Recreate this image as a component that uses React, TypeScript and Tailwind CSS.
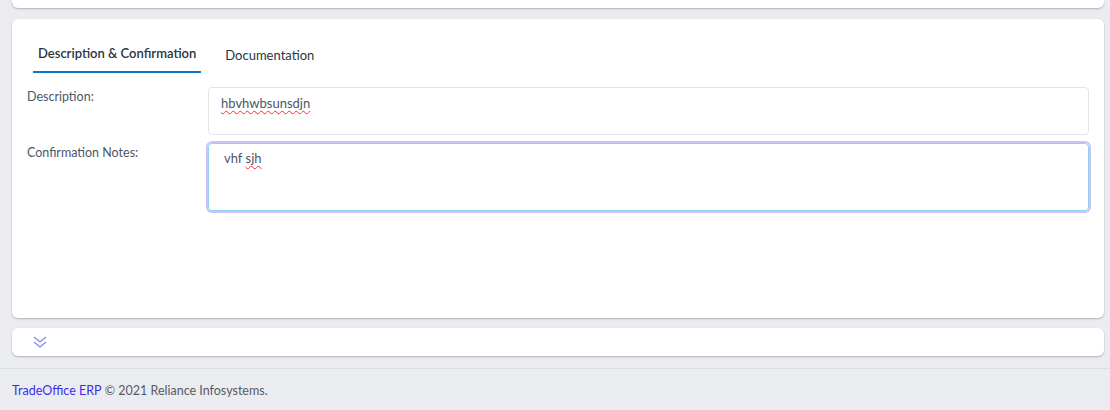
export default function App() {
  return (
    <div className="min-h-[410px] bg-[#ebecef] font-['Lato',sans-serif] text-[12.5px] text-[#3b4252] flex flex-col">
      {/* top card, only bottom edge visible */}
      <div className="pl-3 pr-[6px]">
        <div className="h-2 bg-white rounded-b-md shadow-[0_1px_2px_rgba(0,0,0,0.25)]" />
      </div>

      <div className="pl-3 pr-[6px] mt-[11px]">
        <div className="h-[299px] bg-white rounded-md shadow-[0_1px_2px_rgba(0,0,0,0.25)] px-[15px] pt-[27px]">
          <div className="flex items-end h-[27px] pl-[6px]">
            <div className="px-[5px] pb-[8px] border-b-2 border-[#0b74d0] text-[#2b3440] font-semibold text-[13px]">
              Description &amp; Confirmation
            </div>
            <div className="ml-[24px] pb-[8px] text-[#2b3440] text-[13px]">Documentation</div>
          </div>

          <div className="mt-[14px] flex">
            <div className="w-[181px] pt-[1px] text-[#4d5667]">Description:</div>
            <div className="flex-1 h-[48px] border border-[#e3e4e6] rounded-[4px] px-[12px] pt-[6px] text-[#4d5667] text-[13px]">
              <span className="underline decoration-wavy decoration-red-500 decoration-[1px] underline-offset-2">hbvhwbsunsdjn</span>
            </div>
          </div>

          <div className="mt-[8px] flex">
            <div className="w-[181px] pt-[1px] text-[#4d5667]">Confirmation Notes:</div>
            <div className="flex-1 h-[68px] rounded-[4px] border border-[#8fd3ef] ring-2 ring-[#cac3f7] px-[15px] pt-[5px] text-[#4d5667] text-[13px]">
              vhf <span className="underline decoration-wavy decoration-red-500 decoration-[1px] underline-offset-2">sjh</span>
            </div>
          </div>
        </div>
      </div>

      <div className="pl-3 pr-[6px] mt-[10px]">
        <div className="h-[28px] bg-white rounded-md shadow-[0_1px_2px_rgba(0,0,0,0.25)] flex items-center pl-[20px]">
          <svg width="16" height="16" viewBox="0 0 16 16" fill="none" stroke="#7a86e8" strokeWidth="1.2">
            <path d="M2 3 L8 8 L14 3" />
            <path d="M2 8 L8 13 L14 8" />
          </svg>
        </div>
      </div>

      <div className="mt-[12px] border-t border-[#dcdde0] h-[42px] flex items-center pt-[3px] px-3 text-[#555b66]">
        <span className="text-[#3a2cf0]">TradeOffice ERP</span>
        <span>&nbsp;© 2021 Reliance Infosystems.</span>
      </div>
    </div>
  )
}
